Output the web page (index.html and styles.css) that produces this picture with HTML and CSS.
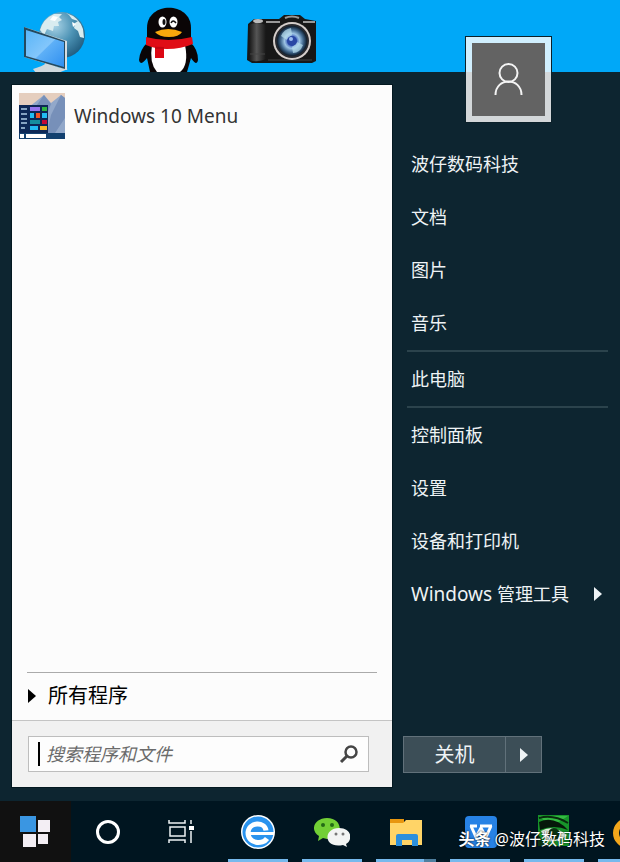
FILE: index.html
```html
<!DOCTYPE html>
<html lang="zh-CN">
<head>
    <meta charset="UTF-8">
    <meta name="viewport" content="width=device-width, initial-scale=1.0">
    <title>Windows 10 Menu</title>
    <link rel="stylesheet" href="styles.css">
</head>
<body>
    <div class="desktop">
        <!-- network -->
        <svg class="desktop-icon" viewBox="19 2 70 70">
            <defs>
                <radialGradient id="globe" cx="0.35" cy="0.3" r="0.8">
                    <stop offset="0" stop-color="#a9d3e6"/>
                    <stop offset="0.5" stop-color="#4d93b5"/>
                    <stop offset="1" stop-color="#1b5578"/>
                </radialGradient>
                <linearGradient id="screen" x1="0" y1="0" x2="1" y2="1">
                    <stop offset="0" stop-color="#59b5f8"/>
                    <stop offset="0.5" stop-color="#83c6fb"/>
                    <stop offset="0.52" stop-color="#5eb0f7"/>
                    <stop offset="1" stop-color="#2f8ff0"/>
                </linearGradient>
            </defs>
            <circle cx="62" cy="35" r="23" fill="url(#globe)"/>
            <path d="M40 30q3-11 14-16l8 0-3 3 3 3-4 2 1 4-5 0-1 5-6-2-3 6zM66 13q13 4 17 16l1 9-4-1-2-6-4-3 1-5 3-2-6-2-3-4z" fill="#d9ecf0"/>
            <path d="M53 16l5 1-3 4-5-1zM72 22l4 2-3 3z" fill="#fff"/>
            <path d="M33 69q10-3 12-5l0-5 8 2 0 4q4 3 15 4l-10 4H36z" fill="#cfd8dd"/>
            <path d="M24 27l43 14v29l-43-13z" fill="#d6dde1"/>
            <path d="M24 27l41 14v28l-41-12z" fill="#24495f"/>
            <path d="M26 30l38 12v25l-38-11z" fill="url(#screen)"/>
        </svg>
        <!-- penguin -->
        <svg class="desktop-icon" viewBox="133 2 70 70">
            <path d="M148 42q-8 7-9 18 1 7 8-2l3 14h37l4-14q6 9 7 2 0-11-8-18z" fill="#0a0506"/>
            <path d="M147 40V28c0-27 44-27 44 0v12z" fill="#0a0506"/>
            <path d="M152 45h33q4 20-5 27h-23q-8-9-5-27z" fill="#fff"/>
            <ellipse cx="162.500" cy="22" rx="4" ry="5.500" fill="#fff"/>
            <ellipse cx="173.500" cy="22" rx="4" ry="5.500" fill="#fff"/>
            <ellipse cx="164" cy="22" rx="1.500" ry="3" fill="#111"/>
            <path d="M171 23q2-4 5 0" fill="none" stroke="#111" stroke-width="1.500"/>
            <path d="M155 32q13-6 27 0-3 5-13 5t-14-5z" fill="#f8a80c"/>
            <path d="M146 37q22 6 46 0l1 7q-12 5-26 5-12 0-21-4z" fill="#e00d16"/>
            <path d="M155 46l9 1v11h-9z" fill="#dc0713"/>
            <path d="M155 48h9" stroke="#a70610" stroke-width="1"/>
        </svg>
        <!-- camera -->
        <svg class="desktop-icon" viewBox="247 2 70 70">
            <defs>
                <linearGradient id="grip" x1="0" x2="1">
                    <stop offset="0" stop-color="#151515"/>
                    <stop offset="0.45" stop-color="#555"/>
                    <stop offset="1" stop-color="#161616"/>
                </linearGradient>
                <radialGradient id="lens">
                    <stop offset="0" stop-color="#233b9b"/>
                    <stop offset="0.3" stop-color="#4567bd"/>
                    <stop offset="0.5" stop-color="#9dc4e4"/>
                    <stop offset="0.75" stop-color="#42698f"/>
                    <stop offset="1" stop-color="#0b1b2c"/>
                </radialGradient>
            </defs>
            <path d="M248 24l6-5h25l5-4h16l5 4 11 2v40l-4 2h-60l-5-3z" fill="#171717"/>
            <path d="M249 25q8-4 17 0v34q-9 4-17 1z" fill="url(#grip)"/>
            <ellipse cx="258" cy="21" rx="5" ry="2" fill="#bbb"/>
            <path d="M266 22h14M285 18q7-3 14 0M303 22h12" fill="none" stroke="#999" stroke-width="2"/>
            <path d="M250 54h15M268 60h44" stroke="#444" stroke-width="1"/>
            <circle cx="292" cy="41" r="19" fill="#d4cdca"/>
            <circle cx="292" cy="41" r="17" fill="#27292f"/>
            <circle cx="292" cy="41" r="15" fill="url(#lens)"/>
            <path d="M281 36q3-7 10-8l1 7-5 5zM303 45q-3 8-10 8l-1-6 5-5z" fill="#b9e0ee" opacity="0.7"/>
            <circle cx="292" cy="41" r="5" fill="#2a48a5"/>
            <circle cx="291" cy="39" r="2" fill="#9bbcf0"/>
        </svg>
    </div>

    <main class="menu">
        <section class="programs">
            <button class="program">
                <svg class="program-icon" viewBox="0 0 46 46">
                    <rect width="46" height="46" fill="#e5cebe"/>
                    <path d="M0 14l10 0 15-12 7 8 10-8 4 3v41H0z" fill="#92a8ca"/>
                    <path d="M15 16l10-14 7 9-5 13zM32 22l10-20 4 3v20l-10 15h-8z" fill="#7790b9"/>
                    <rect y="12" width="29" height="28" fill="#0d2856"/>
                    <rect y="40" width="46" height="6" fill="#12406f"/>
                    <path d="M2 16h6M2 21h6M2 26h6M2 30h6M2 35h4" stroke="#afcbe5" stroke-width="1.500"/>
                    <path d="M11 14h10v4H11z" fill="#9675ef"/>
                    <path d="M23 14h5v4h-5z" fill="#2eb542"/>
                    <path d="M11 20h4v5h-4zM23 20h5v5h-5zM11 33h8v4h-8z" fill="#22bdf3"/>
                    <path d="M17 20h4v5h-4z" fill="#f35325"/>
                    <path d="M11 27h10v4H11z" fill="#158e9e"/>
                    <path d="M23 27h5v4h-5z" fill="#c40835"/>
                    <path d="M21 33h7v4h-7z" fill="#f7b52a"/>
                    <path d="M1 41h4v4H1zM7 41h20v4H7z" fill="#fff"/>
                </svg>
                <span class="latin">Windows 10 Menu</span>
            </button>
            <button class="all-programs">
                <svg class="arrow" viewBox="0 0 8 14"><path d="M0 0l8 7-8 7z" fill="currentColor"/></svg>
                <span>所有程序</span>
            </button>
            <form class="search">
                <div class="search-box">
                    <span class="caret"></span>
                    <input class="search-input" type="text" placeholder="搜索程序和文件" aria-label="搜索程序和文件">
                    <button class="search-button" type="button" aria-label="搜索">
                        <svg width="20" height="20" viewBox="0 0 20 20" fill="none" stroke="#454545">
                            <circle cx="12" cy="8" r="5.500" stroke-width="2.500"/>
                            <path d="M8 12l-6 6" stroke-width="3"/>
                        </svg>
                    </button>
                </div>
            </form>
        </section>

        <aside class="places">
            <button class="avatar" aria-label="波仔数码科技">
                <svg viewBox="0 0 73 73" fill="none" stroke="#f4f4f4" stroke-width="2">
                    <circle cx="36.500" cy="30" r="9"/>
                    <path d="M23.500 52c0-18 26-18 26 0"/>
                </svg>
            </button>
            <nav class="links">
                <a class="link" href="#">波仔数码科技</a>
                <a class="link" href="#">文档</a>
                <a class="link" href="#">图片</a>
                <a class="link" href="#">音乐</a>
                <hr class="line">
                <a class="link" href="#">此电脑</a>
                <hr class="line">
                <a class="link" href="#">控制面板</a>
                <a class="link" href="#">设置</a>
                <a class="link" href="#">设备和打印机</a>
                <a class="link" href="#">
                    <span><span class="latin">Windows </span>管理工具</span>
                    <svg class="arrow" viewBox="0 0 8 14"><path d="M0 0l8 7-8 7z" fill="currentColor"/></svg>
                </a>
            </nav>
            <div class="power">
                <button class="power-off">关机</button>
                <button class="power-more" aria-label="更多">
                    <svg class="arrow" viewBox="0 0 8 14"><path d="M0 0l8 7-8 7z" fill="currentColor"/></svg>
                </button>
            </div>
        </aside>
    </main>

    <footer class="taskbar">
        <button class="task start" aria-label="开始">
            <svg viewBox="0 0 32 32">
                <path d="M0 0h16v16H0z" fill="#3a96e2"/>
                <path d="M18 4h12v12H18zM3 18h13v13H3zM18 18h10v10H18z" fill="#f3eef4"/>
            </svg>
        </button>
        <button class="task" aria-label="Cortana">
            <svg viewBox="0 0 32 32"><circle cx="16" cy="16" r="10.500" fill="none" stroke="#fff" stroke-width="3"/></svg>
        </button>
        <button class="task" aria-label="任务视图">
            <svg viewBox="0 0 32 32" fill="none" stroke="#edf2f4" stroke-width="1.500">
                <path d="M4 4v3h16V4M4 27v-3h16v3M5 11h15v9H5zM26 4v4M26 15v12"/>
                <path d="M24 10h5v4h-5z" fill="#fff" stroke="none"/>
            </svg>
        </button>
        <div class="apps">
            <button class="task app" aria-label="浏览器">
                <svg class="wide" viewBox="0 0 36 36">
                    <circle cx="18" cy="18" r="17" fill="#fff"/>
                    <circle cx="18" cy="18" r="15.500" fill="#2a93ee"/>
                    <path d="M26 16.500c-1-9-17-9-18 2 0 12 15 12 19 6" fill="none" stroke="#fff" stroke-width="5"/>
                    <path d="M10 19.500h24" stroke="#fff" stroke-width="3"/>
                </svg>
            </button>
            <button class="task app" aria-label="微信">
                <svg class="wide" viewBox="0 0 36 36">
                    <path d="M13 4c17 0 17 21 0 21l-4-1-5 3 1-5C-5 16 1 4 13 4z" fill="#72cf35"/>
                    <circle cx="9" cy="11" r="2" fill="#246b16"/>
                    <circle cx="18" cy="11" r="2" fill="#246b16"/>
                    <path d="M25 14c13 0 14 12 7 16l1 3-4-2c-20 4-20-17-4-17z" fill="#f2f4f3"/>
                    <circle cx="22" cy="20" r="1.500" fill="#777"/>
                    <circle cx="29" cy="20" r="1.500" fill="#777"/>
                </svg>
            </button>
            <button class="task app grouped" aria-label="文件资源管理器">
                <svg class="wide" viewBox="0 0 36 36">
                    <path d="M2 5h14v4H2z" fill="#e8960f"/>
                    <path d="M2 9h13l3-3h16v25H2z" fill="#ffd467"/>
                    <path d="M8 22q0-2 2-2h18q2 0 2 2v10h-6v-6H14v6H8z" fill="#2c8fdc"/>
                </svg>
            </button>
            <button class="task app" aria-label="WPS">
                <svg class="wide" viewBox="0 0 36 36">
                    <rect x="3" y="2" width="32" height="32" rx="4" fill="#2782e5"/>
                    <path d="M8 12h7M9 12l5 11 5-9 5 9 5-11M18 12h12" fill="none" stroke="#fff" stroke-width="3"/>
                </svg>
            </button>
            <button class="task app" aria-label="截图">
                <svg class="wide" viewBox="0 0 36 36">
                    <rect x="2" y="1" width="31" height="31" fill="#17942a"/>
                    <path d="M3 2h29L15 13z" fill="#34ba42"/>
                    <path d="M3 8q15-7 29 8-14-6-28 0z" fill="#06180a"/>
                    <path d="M5 17q12-7 26 4-8 8-21 6z" fill="#e3f2df"/>
                    <circle cx="18" cy="20" r="6" fill="#0b3512"/>
                    <path d="M2 20l6 9 13 3H2z" fill="#0b3512"/>
                    <path d="M3 4q14-4 29 5" fill="none" stroke="#082b0d" stroke-width="2"/>
                </svg>
            </button>
            <button class="task app" aria-label="音乐">
                <svg class="wide" viewBox="0 0 36 36">
                    <circle cx="18" cy="19" r="12" fill="none" stroke="#f4a71b" stroke-width="6"/>
                </svg>
            </button>
        </div>
        <p class="author"><strong>头条</strong> @波仔数码科技</p>
    </footer>
</body>
</html>
```

FILE: styles.css
```css
* {
    margin: 0;
    padding: 0;
    box-sizing: border-box;
}

body {
    display: flex;
    flex-direction: column;
    min-height: 100vh;
    font-family: "Noto Sans", "Noto Sans CJK SC", sans-serif;
    font-size: 18px;
    line-height: 24px;
    color: #eef3f5;
    background: #0d2530;
    overflow-x: hidden;
}

button {
    border: none;
    background: none;
    font: inherit;
    color: inherit;
    cursor: pointer;
}

svg {
    display: block;
    flex: none;
}

.arrow {
    width: 8px;
    height: 14px;
}

.latin {
    font-size: 19px;
}

/* Desktop */
.desktop {
    display: flex;
    gap: 44px;
    height: 72px;
    padding: 2px 19px 0;
    background: #00a8f8;
}

.desktop-icon {
    width: 70px;
    height: 70px;
}

/* Start menu */
.menu {
    flex: 1;
    display: flex;
    gap: 11px;
    padding: 13px 12px 14px;
    background: #0d2530;
}

.programs {
    flex: 1;
    display: flex;
    flex-direction: column;
    background: #fcfcfc;
    color: #333;
    box-shadow: 0 0 0 1px #031820;
}

.program {
    display: flex;
    align-items: center;
    gap: 9px;
    padding: 8px 7px;
    text-align: left;
}

.program-icon {
    width: 46px;
    height: 46px;
}

.all-programs {
    display: flex;
    align-items: center;
    gap: 12px;
    height: 48px;
    margin: auto 15px 0;
    padding: 0 1px 2px;
    border-top: 1px solid #aaa;
    font-size: 20px;
    color: #000;
}

.search {
    padding: 15px 23px 15px 16px;
    background: #f1f1f1;
    border-top: 1px solid #c4c4c4;
}

.search-box {
    display: flex;
    align-items: center;
    height: 36px;
    padding: 0 9px;
    background: #fdfdfd;
    border: 1px solid #bdbdbd;
}

.caret {
    width: 2px;
    height: 24px;
    background: #000;
}

.search-input {
    flex: 1;
    min-width: 0;
    padding-left: 6px;
    border: none;
    outline: none;
    background: none;
    font: inherit;
    color: #333;
}

.search-input::placeholder {
    color: #6b6b6b;
    font-style: italic;
    opacity: 1;
}

/* Right column */
.places {
    position: relative;
    display: flex;
    flex-direction: column;
    width: 205px;
    padding: 52px 0 14px;
}

.avatar {
    position: absolute;
    top: -49px;
    left: 62px;
    width: 87px;
    height: 87px;
    padding: 6px;
    border: 1px solid #0b2029;
    background: rgba(255, 255, 255, 0.82);
}

.avatar svg {
    width: 100%;
    height: 100%;
    background: #636363;
}

.links {
    margin-left: 4px;
}

.link {
    display: flex;
    align-items: center;
    justify-content: space-between;
    height: 53px;
    padding: 0 6px 0 4px;
    color: inherit;
    text-decoration: none;
}

.line {
    height: 2px;
    margin: 1px 0 0;
    border: none;
    background: #2b434c;
}

.power {
    display: flex;
    width: 139px;
    height: 37px;
    margin-top: auto;
    background: #3c4e57;
    border: 1px solid #61717a;
}

.power-off {
    flex: 1;
    font-size: 20px;
}

.power-more {
    display: flex;
    align-items: center;
    justify-content: center;
    width: 36px;
    border-left: 1px solid #61717a;
}

/* Taskbar */
.taskbar {
    position: relative;
    display: flex;
    height: 61px;
    background: #001520;
    overflow: hidden;
}

.task {
    display: flex;
    flex: none;
    align-items: center;
    justify-content: center;
    width: 73px;
}

.task svg {
    width: 32px;
    height: 32px;
}

.task .wide {
    width: 36px;
    height: 36px;
}

.start {
    width: 71px;
    background: #111;
}

.apps {
    display: flex;
    margin-left: 4px;
}

.app {
    position: relative;
    width: 74px;
}

.app::after {
    content: "";
    position: absolute;
    right: 7px;
    bottom: 0;
    left: 7px;
    height: 3px;
    background: #76b9ed;
}

.grouped::after {
    background: linear-gradient(90deg, #76b9ed 80%, #4f7f9f 80%);
}

.author {
    position: absolute;
    right: 15px;
    bottom: 11px;
    font-size: 16px;
    color: #fff;
    text-shadow: 0 0 2px #000;
}
```
